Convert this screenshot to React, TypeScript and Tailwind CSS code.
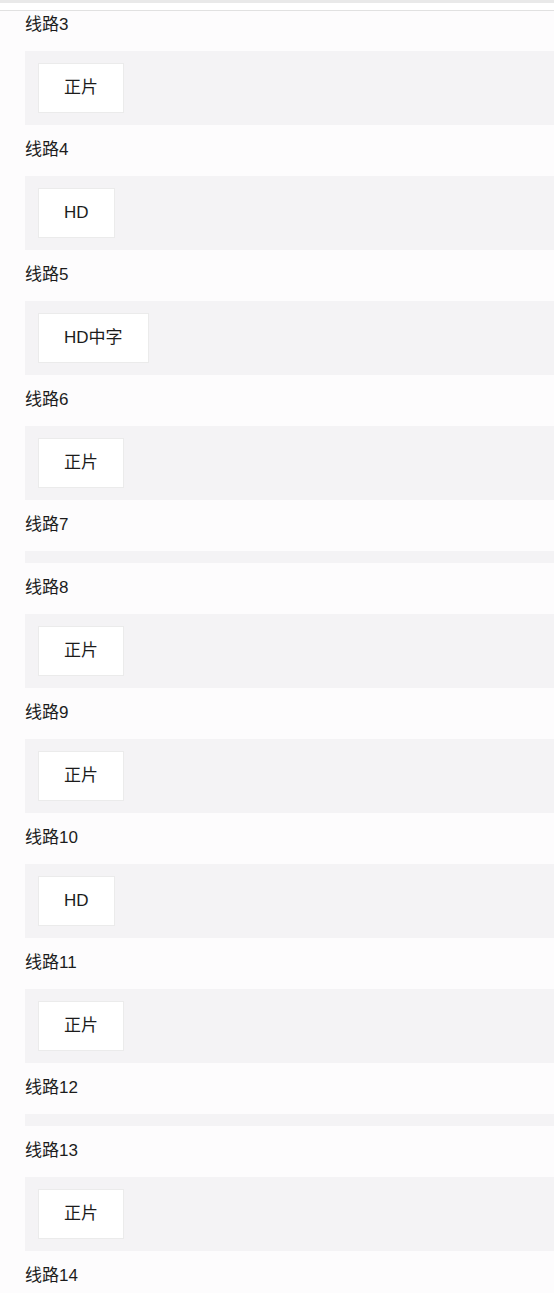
import React from "react";

type Line = { name: string; items: string[] };

const lines: Line[] = [
  { name: "线路3", items: ["正片"] },
  { name: "线路4", items: ["HD"] },
  { name: "线路5", items: ["HD中字"] },
  { name: "线路6", items: ["正片"] },
  { name: "线路7", items: [] },
  { name: "线路8", items: ["正片"] },
  { name: "线路9", items: ["正片"] },
  { name: "线路10", items: ["HD"] },
  { name: "线路11", items: ["正片"] },
  { name: "线路12", items: [] },
  { name: "线路13", items: ["正片"] },
  { name: "线路14", items: [] },
];

const font = { fontFamily: '"Liberation Sans", "Noto Sans CJK SC", sans-serif' };

const App: React.FC = () => {
  return (
    <div className="min-h-[1293px] w-[554px] overflow-hidden bg-[#fdfcfd] text-[17px] text-[#1c1c1c]" style={font}>
      <div className="h-[3px] bg-[#e9e9e9]" />
      <div className="h-[8px] bg-white border-b border-[#e1e1e1]" />
      {lines.map((line, i) => (
        <div key={line.name}>
          <div className={`pl-[25px] leading-[24px] ${i === 0 ? "h-[40px] pt-[2px]" : "h-[51px] pt-[13px]"}`}>
            {line.name}
          </div>
          {i < lines.length - 1 && (
            <div className="ml-[25px] flex gap-[10px] bg-[#f4f3f5] px-[13px] py-[6px]">
              {line.items.map((it) => (
                <div
                  key={it}
                  className="my-[6px] flex h-[50px] items-center border border-[#ebebeb] bg-white px-[25px]"
                >
                  {it}
                </div>
              ))}
            </div>
          )}
        </div>
      ))}
    </div>
  );
};

export default App;
